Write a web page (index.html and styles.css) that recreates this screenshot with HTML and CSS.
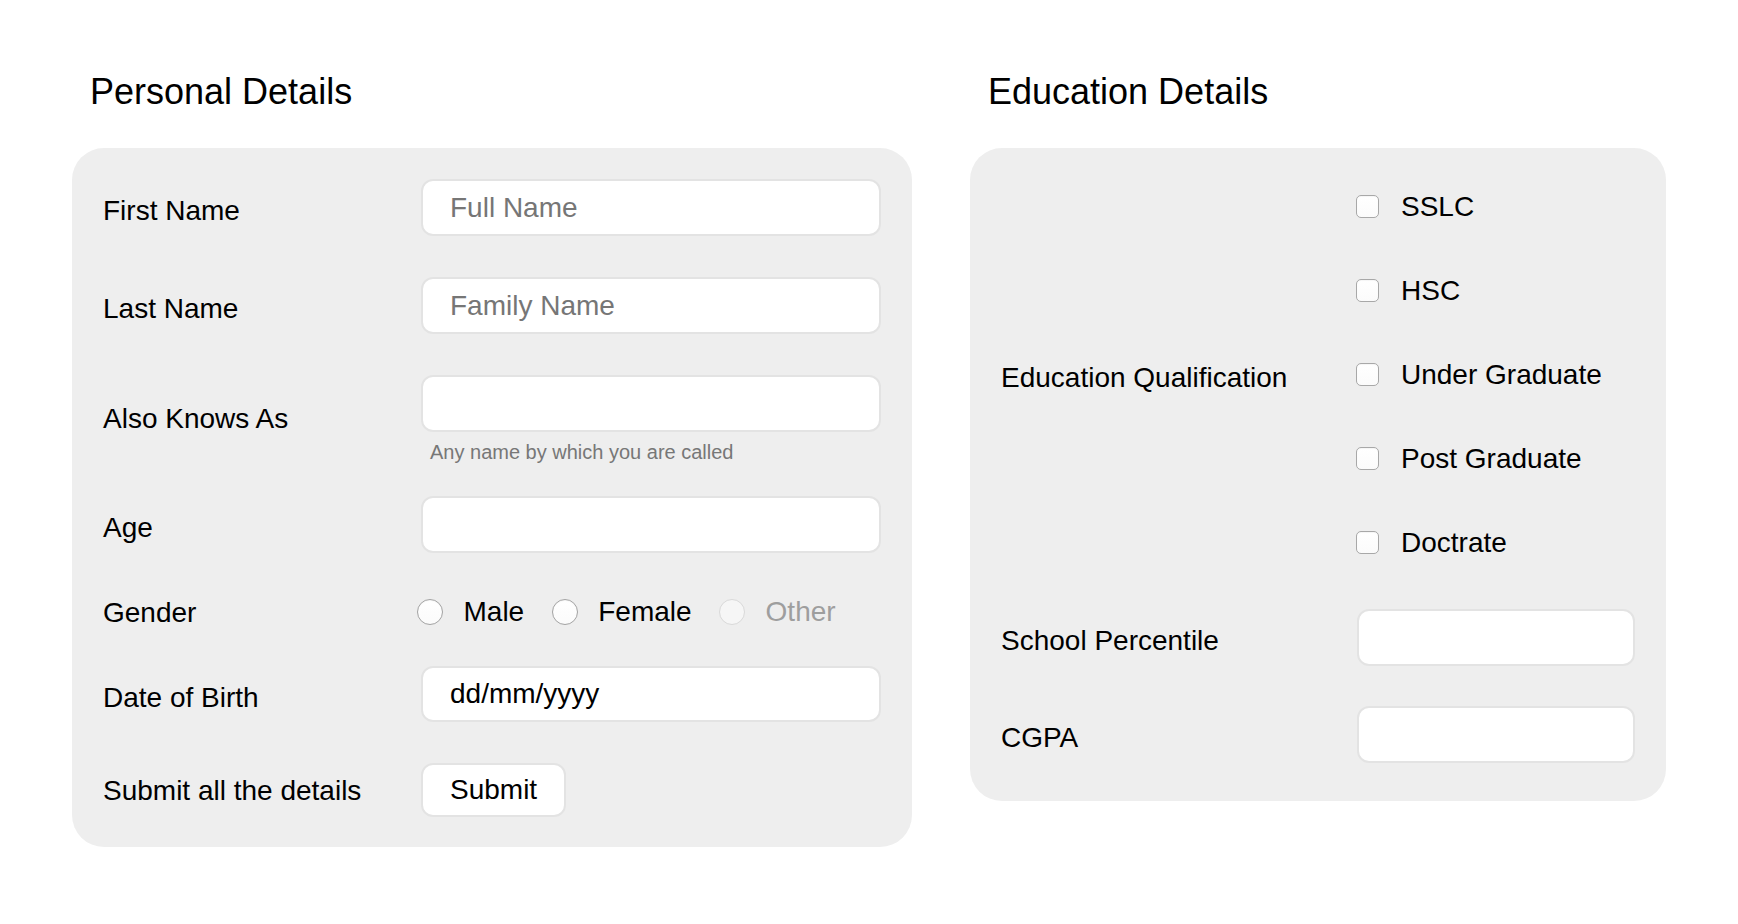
FILE: index.html
```html
<!DOCTYPE html>
<html lang="en">
<head>
<meta charset="utf-8">
<title>Details Form</title>
<link rel="stylesheet" href="styles.css">
</head>
<body>
<div class="page">
  <section class="section section-personal">
    <h2 class="section-title">Personal Details</h2>
    <form class="panel form-grid personal-grid">
      <label class="field-label" for="first">First Name</label>
      <input class="text-input" id="first" type="text" placeholder="Full Name">

      <label class="field-label" for="last">Last Name</label>
      <input class="text-input" id="last" type="text" placeholder="Family Name">

      <label class="field-label" for="aka">Also Knows As</label>
      <div class="field-stack">
        <input class="text-input" id="aka" type="text">
        <div class="helper">Any name by which you are called</div>
      </div>

      <label class="field-label" for="age">Age</label>
      <input class="text-input" id="age" type="text">

      <span class="field-label">Gender</span>
      <div class="radio-group">
        <label class="radio-option"><input class="radio" type="radio" name="gender"><span>Male</span></label>
        <label class="radio-option"><input class="radio" type="radio" name="gender"><span>Female</span></label>
        <label class="radio-option is-disabled"><input class="radio" type="radio" name="gender" disabled><span>Other</span></label>
      </div>

      <label class="field-label" for="dob">Date of Birth</label>
      <input class="text-input date-input" id="dob" type="text" placeholder="dd/mm/yyyy">

      <span class="field-label field-label-centered">Submit all the details</span>
      <div class="button-cell"><button class="submit-btn" type="button">Submit</button></div>
    </form>
  </section>

  <section class="section section-education">
    <h2 class="section-title">Education Details</h2>
    <form class="panel form-grid education-grid">
      <span class="field-label">Education Qualification</span>
      <div class="check-group">
        <label class="check-option"><input class="checkbox" type="checkbox"><span>SSLC</span></label>
        <label class="check-option"><input class="checkbox" type="checkbox"><span>HSC</span></label>
        <label class="check-option"><input class="checkbox" type="checkbox"><span>Under Graduate</span></label>
        <label class="check-option"><input class="checkbox" type="checkbox"><span>Post Graduate</span></label>
        <label class="check-option"><input class="checkbox" type="checkbox"><span>Doctrate</span></label>
      </div>

      <label class="field-label" for="school">School Percentile</label>
      <input class="text-input" id="school" type="text">

      <label class="field-label" for="cgpa">CGPA</label>
      <input class="text-input" id="cgpa" type="text">
    </form>
  </section>
</div>
</body>
</html>
```

FILE: styles.css
```css
* {
  box-sizing: border-box;
}

html, body {
  margin: 0;
  padding: 0;
  background: #ffffff;
}

body {
  font-family: "Liberation Sans", Arial, Helvetica, sans-serif;
  color: #000000;
}

.page {
  display: flex;
  align-items: flex-start;
  gap: 58px;
  padding: 71px 72px 0;
}

.section-personal {
  width: 840px;
}

.section-education {
  width: 696px;
}

.section-title {
  margin: 0 0 36px;
  padding: 0 18px;
  font-size: 36px;
  font-weight: 400;
  line-height: 41px;
}

.panel {
  margin: 0;
  background: #eeeeee;
  border-radius: 32px;
}

.form-grid {
  display: grid;
  align-items: center;
  row-gap: 41px;
}

.personal-grid {
  grid-template-columns: 318px 1fr;
  padding: 31px 31px 30px;
}

.education-grid {
  grid-template-columns: 356px 1fr;
  row-gap: 40px;
  padding: 31px 31px 38px;
}

.field-label {
  font-size: 28px;
  line-height: 25px;
  padding-top: 6px;
}

.field-label-centered {
  line-height: 31px;
  padding-top: 0;
}

.text-input {
  display: block;
  width: 100%;
  height: 57px;
  margin: 0;
  padding: 0 27px;
  border: 2px solid #e3e3e3;
  border-radius: 12px;
  background: #ffffff;
  font-family: inherit;
  font-size: 28px;
  color: #000000;
  outline: none;
}

.text-input::placeholder {
  color: #767676;
  opacity: 1;
}

.date-input {
  height: 56px;
}

.date-input::placeholder {
  color: #000000;
}

.helper {
  margin: 10px 0 -7px;
  padding-left: 9px;
  font-size: 20px;
  line-height: 20px;
  color: #777777;
}

.radio-group {
  display: flex;
  align-items: center;
  height: 26px;
  margin: 4px 0 0 -4px;
}

.radio-option {
  display: flex;
  align-items: center;
  gap: 20.5px;
  margin-right: 27.5px;
  font-size: 28px;
  line-height: 31px;
}

.radio {
  appearance: none;
  -webkit-appearance: none;
  flex: none;
  width: 26px;
  height: 26px;
  margin: 0;
  border: 1px solid #a3a3a3;
  border-radius: 50%;
  background: linear-gradient(#ffffff, #fbfbfb);
  box-shadow: inset 0 1px 1px rgba(0, 0, 0, 0.04);
}

.is-disabled {
  color: #9e9e9e;
}

.is-disabled .radio {
  border-color: #d9d9d9;
  background: #f6f6f6;
  box-shadow: none;
}

.button-cell {
  display: flex;
}

.submit-btn {
  display: block;
  height: 54px;
  padding: 0 27px;
  border: 2px solid #e3e3e3;
  border-radius: 12px;
  background: #ffffff;
  font-family: inherit;
  font-size: 28px;
  color: #000000;
}

.check-group {
  display: flex;
  flex-direction: column;
  gap: 30px;
  margin-left: -1px;
}

.check-option {
  display: flex;
  align-items: center;
  gap: 22px;
  height: 54px;
  font-size: 28px;
  line-height: 31px;
}

.checkbox {
  appearance: none;
  -webkit-appearance: none;
  flex: none;
  width: 23px;
  height: 23px;
  margin: 0;
  border: 1px solid #a8a8a8;
  border-radius: 5px;
  background: linear-gradient(#ffffff, #fbfbfb);
  box-shadow: inset 0 1px 1px rgba(0, 0, 0, 0.04);
}
```
